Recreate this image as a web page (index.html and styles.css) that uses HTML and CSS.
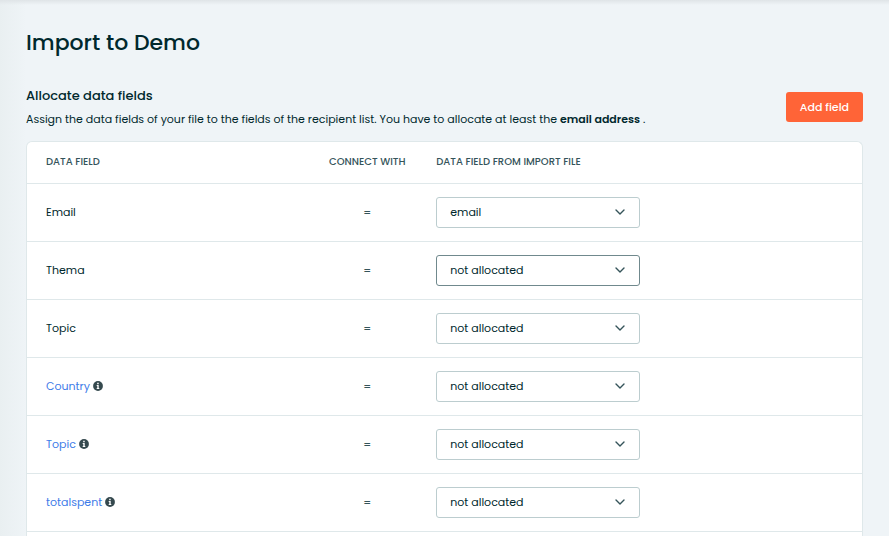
FILE: index.html
```
<!DOCTYPE html>
<html lang="en">
<head>
    <meta charset="UTF-8">
    <meta name="viewport" content="width=device-width, initial-scale=1.0">
    <title>Import to Demo</title>
    <link rel="stylesheet" href="styles.css">
</head>
<body>
    <!-- Shared icons -->
    <svg class="icon-defs" aria-hidden="true">
        <symbol id="chevron" viewBox="0 0 10 6">
            <path d="M1 1l4 4 4-4" fill="none" stroke="currentColor" stroke-width="1.4" stroke-linecap="round" stroke-linejoin="round"/>
        </symbol>
        <symbol id="info" viewBox="0 0 10 10">
            <circle cx="5" cy="5" r="4.9" fill="currentColor"/>
            <path d="M4.2 1.8h1.5v1.4H4.2zM3.7 4h2v2.9h.6v1H3.7v-1h.6V5h-.6z" fill="#fff"/>
        </symbol>
    </svg>

    <main class="page">
        <h1>Import to Demo</h1>

        <div class="section-header">
            <div class="section-text">
                <h2>Allocate data fields</h2>
                <p>Assign the data fields of your file to the fields of the recipient list. You have to allocate at least the <strong>email address</strong> .</p>
            </div>
            <button type="button" class="add-button">Add field</button>
        </div>

        <div class="card">
            <table class="fields">
                <thead>
                    <tr>
                        <th class="col-field">Data field</th>
                        <th class="col-connect">Connect with</th>
                        <th class="col-import">Data field from import file</th>
                    </tr>
                </thead>
                <tbody>
                    <tr>
                        <td><label for="field-email">Email</label></td>
                        <td class="equals">=</td>
                        <td class="col-import">
                            <div class="select">
                                <select id="field-email">
                                    <option>not allocated</option>
                                    <option selected>email</option>
                                </select>
                                <svg class="chevron"><use href="#chevron"/></svg>
                            </div>
                        </td>
                    </tr>
                    <tr>
                        <td><label for="field-thema">Thema</label></td>
                        <td class="equals">=</td>
                        <td class="col-import">
                            <div class="select active">
                                <select id="field-thema">
                                    <option selected>not allocated</option>
                                    <option>email</option>
                                </select>
                                <svg class="chevron"><use href="#chevron"/></svg>
                            </div>
                        </td>
                    </tr>
                    <tr>
                        <td><label for="field-topic">Topic</label></td>
                        <td class="equals">=</td>
                        <td class="col-import">
                            <div class="select">
                                <select id="field-topic">
                                    <option selected>not allocated</option>
                                    <option>email</option>
                                </select>
                                <svg class="chevron"><use href="#chevron"/></svg>
                            </div>
                        </td>
                    </tr>
                    <tr>
                        <td>
                            <label class="custom" for="field-country"><a href="#">Country</a><svg class="info"><use href="#info"/></svg></label>
                        </td>
                        <td class="equals">=</td>
                        <td class="col-import">
                            <div class="select">
                                <select id="field-country">
                                    <option selected>not allocated</option>
                                    <option>email</option>
                                </select>
                                <svg class="chevron"><use href="#chevron"/></svg>
                            </div>
                        </td>
                    </tr>
                    <tr>
                        <td>
                            <label class="custom" for="field-topic-custom"><a href="#">Topic</a><svg class="info"><use href="#info"/></svg></label>
                        </td>
                        <td class="equals">=</td>
                        <td class="col-import">
                            <div class="select">
                                <select id="field-topic-custom">
                                    <option selected>not allocated</option>
                                    <option>email</option>
                                </select>
                                <svg class="chevron"><use href="#chevron"/></svg>
                            </div>
                        </td>
                    </tr>
                    <tr>
                        <td>
                            <label class="custom" for="field-totalspent"><a href="#">totalspent</a><svg class="info"><use href="#info"/></svg></label>
                        </td>
                        <td class="equals">=</td>
                        <td class="col-import">
                            <div class="select">
                                <select id="field-totalspent">
                                    <option selected>not allocated</option>
                                    <option>email</option>
                                </select>
                                <svg class="chevron"><use href="#chevron"/></svg>
                            </div>
                        </td>
                    </tr>
                </tbody>
            </table>
        </div>
    </main>
</body>
</html>
```
FILE: styles.css
```
* {
    box-sizing: border-box;
}

body {
    margin: 0;
    font-family: Poppins, Inter, "Open Sans", sans-serif;
    font-size: 11px;
    line-height: 18px;
    color: #00282d;
    /* soft shadows cast by the top bar and the side menu */
    background:
        linear-gradient(to bottom, #dfe4e7, rgba(223, 228, 231, 0) 5px),
        linear-gradient(to right, #e9eff1, #eff4f7 26px);
}

.icon-defs {
    display: none;
}

.page {
    display: flex;
    flex-direction: column;
    min-height: 100vh;
    padding: 27px 26px 0;
}

h1 {
    margin: 0;
    font-size: 22px;
    font-weight: 500;
    line-height: 32px;
}

.section-header {
    display: flex;
    align-items: center;
    justify-content: space-between;
    margin: 27px 0 13px;
}

h2 {
    margin: 0 0 4px;
    font-size: 13px;
    font-weight: 500;
    line-height: 20px;
}

.section-text p {
    margin: 0;
}

.section-text strong {
    font-weight: 600;
}

.add-button {
    height: 30px;
    padding: 0 14px;
    border: none;
    border-radius: 3px;
    background-color: #ff6437;
    color: white;
    font: inherit;
    font-weight: 500;
    white-space: nowrap;
    cursor: pointer;
}

.card {
    flex: 1;
    border: 1px solid #dfe8ea;
    border-bottom: none;
    border-radius: 6px 6px 0 0;
    background-color: white;
}

.fields {
    width: 100%;
    table-layout: fixed;
    border-collapse: collapse;
}

.fields th {
    height: 41px;
    padding: 0 19px;
    border-bottom: 1px solid #dfe8ea;
    color: #35545a;
    font-size: 10px;
    font-weight: 500;
    text-align: left;
    text-transform: uppercase;
}

.fields td {
    height: 58px;
    padding: 0 19px;
    border-bottom: 1px solid #dfe8ea;
}

.fields .col-field {
    width: 35%;
}

.fields .col-connect {
    width: 96px;
    padding: 0;
    text-align: center;
}

.fields .col-import {
    padding-left: 21px;
}

.fields .equals {
    padding: 0;
    color: #35545a;
    text-align: center;
}

.custom {
    display: flex;
    align-items: center;
    gap: 3px;
}

.custom a {
    color: #3d7be8;
    text-decoration: none;
}

.info {
    width: 10px;
    height: 10px;
    color: #35494e;
}

.select {
    position: relative;
    width: 204px;
}

.select select {
    display: block;
    width: 100%;
    height: 31px;
    padding: 0 36px 0 13px;
    border: 1px solid #bccdcf;
    border-radius: 3px;
    appearance: none;
    background-color: white;
    color: inherit;
    font: inherit;
}

.select.active select {
    border-color: #70898d;
}

.chevron {
    position: absolute;
    top: 12px;
    right: 15px;
    width: 10px;
    height: 6px;
    color: #35545a;
    pointer-events: none;
}
```
